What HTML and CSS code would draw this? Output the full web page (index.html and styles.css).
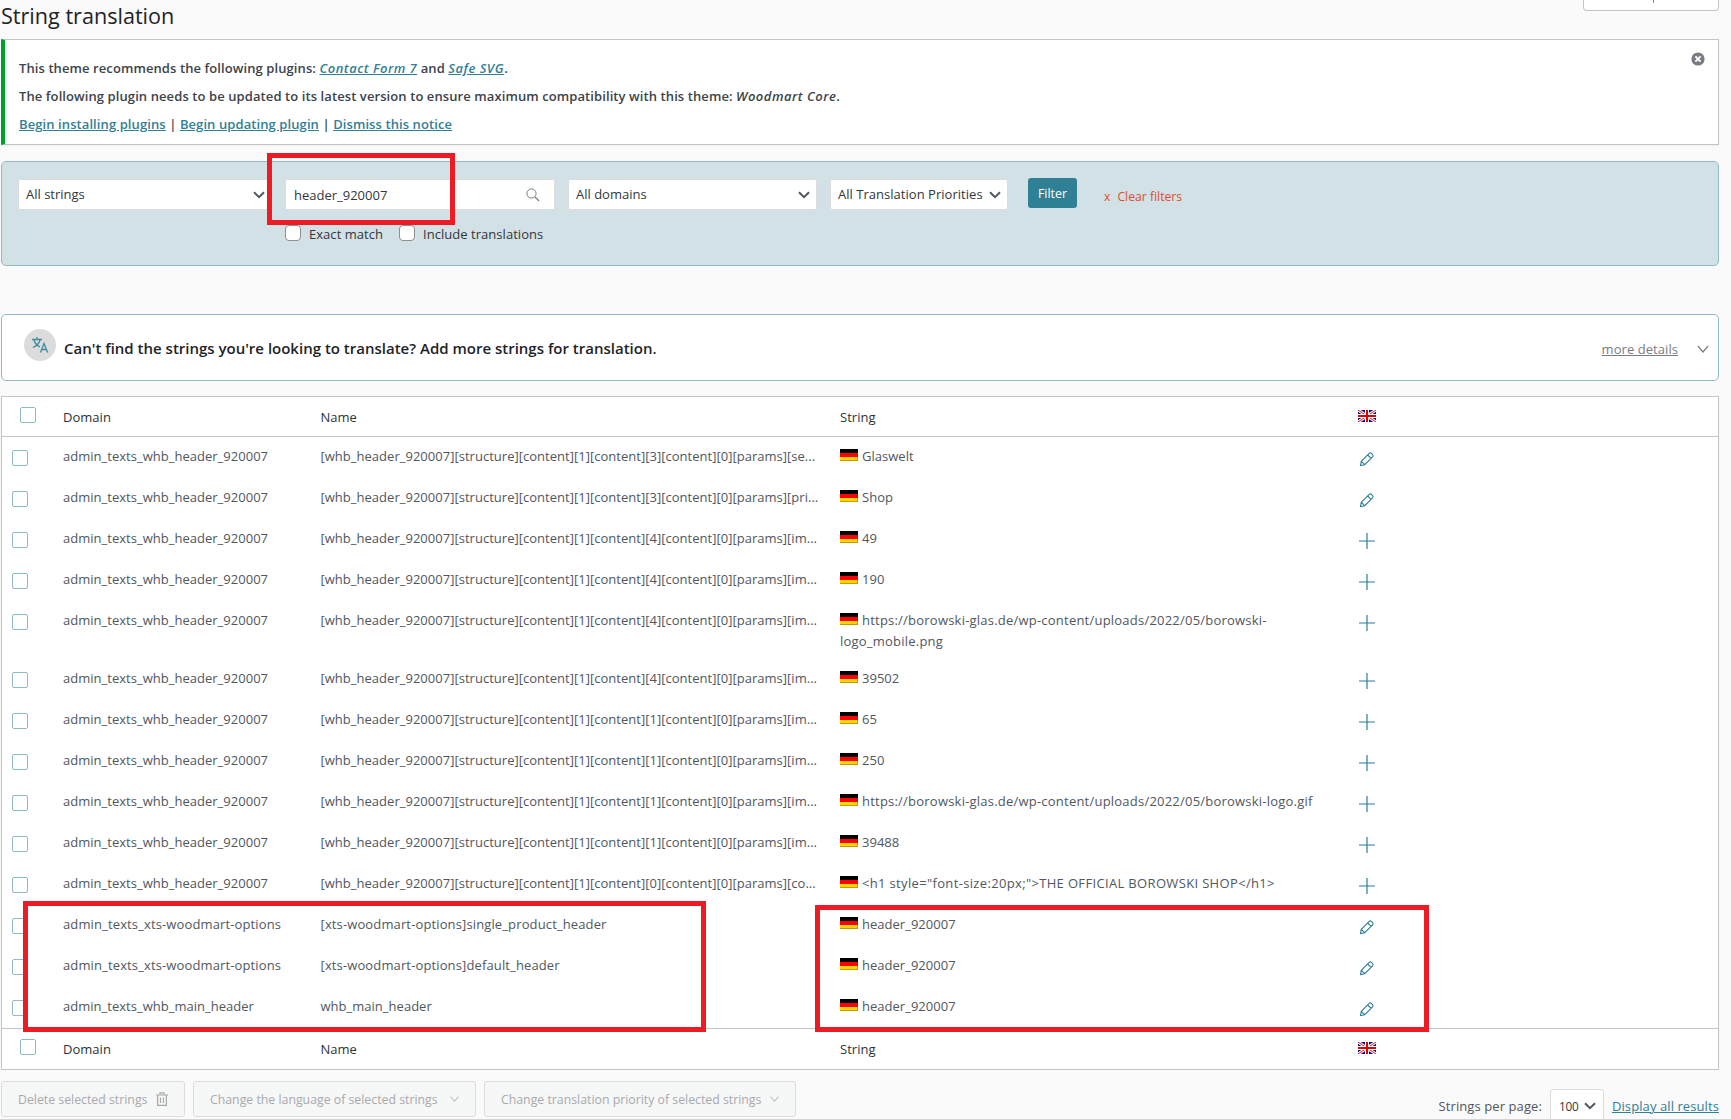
FILE: index.html
```html
<!DOCTYPE html>
<html lang="en">
<head>
  <meta charset="UTF-8" />
  <meta name="viewport" content="width=device-width, initial-scale=1.0"/>
  <title>String translation</title>
  <link rel="stylesheet" href="styles.css">
</head>
<body>
  <!-- shared icons -->
  <svg class="sprite" xmlns="http://www.w3.org/2000/svg">
    <symbol id="flag-de" viewBox="0 0 18 12">
      <rect width="18" height="4" fill="#000"/>
      <rect y="4" width="18" height="4" fill="#f00"/>
      <rect y="8" width="18" height="4" fill="#ffd500"/>
      <path d="M0 11.5h18M17.5 8v4" stroke="#c79a00" fill="none"/>
    </symbol>
    <symbol id="flag-gb" viewBox="0 0 18 12">
      <rect width="18" height="12" fill="#00107b"/>
      <path d="M0 0l18 12M18 0L0 12" stroke="#fff" stroke-width="3"/>
      <path d="M0 0l18 12M18 0L0 12" stroke="#e8112d" stroke-width="1"/>
      <path d="M9 0v12M0 6h18" stroke="#fff" stroke-width="4"/>
      <path d="M9 0v12M0 6h18" stroke="#e00000" stroke-width="2"/>
    </symbol>
    <symbol id="pencil" viewBox="0 0 16 16">
      <path d="M1.500 14.500l.8-4.200 7.900-7.900a1.500 1.500 0 0 1 2.100 0l1.300 1.300a1.500 1.500 0 0 1 0 2.100l-7.900 7.900zM2.300 10.300l3.400 3.400M8.700 4l3.400 3.400" fill="none" stroke="#2f7f95" stroke-width="1.100"/>
    </symbol>
    <symbol id="plus" viewBox="0 0 16 16">
      <path d="M8 0v16M0 8h16" stroke="#2f7f95" stroke-width="1.200" fill="none"/>
    </symbol>
    <symbol id="chevron" viewBox="0 0 12 8">
      <path d="M1 1.200l5 5 5-5" fill="none" stroke="currentColor" stroke-width="2"/>
    </symbol>
    <symbol id="chevron-thin" viewBox="0 0 12 8">
      <path d="M.8.8L6 7 11.200.8" fill="none" stroke="currentColor" stroke-width="1.300"/>
    </symbol>
  </svg>

  <div class="wrap">
    <header class="page-head">
      <h1>String translation</h1>
      <div class="screen-options"><span></span></div>
    </header>

    <div class="notice">
      <p>This theme recommends the following plugins: <a href="#"><em>Contact Form 7</em></a> and <a href="#"><em>Safe SVG</em></a>.</p>
      <p>The following plugin needs to be updated to its latest version to ensure maximum compatibility with this theme: <em>Woodmart Core</em>.</p>
      <p><a href="#">Begin installing plugins</a> | <a href="#">Begin updating plugin</a> | <a href="#">Dismiss this notice</a></p>
      <svg class="dismiss" viewBox="0 0 14 14"><circle cx="7" cy="7" r="6.600" fill="#787c82"/><path d="M4.400 4.400l5.200 5.200M9.600 4.400L4.400 9.600" stroke="#fff" stroke-width="2"/></svg>
    </div>

    <form class="filters">
      <div class="select select-strings">All strings <svg class="arrow"><use href="#chevron"/></svg></div>
      <div class="search">
        <div class="search-field">
          <span class="search-text">header_920007</span>
          <svg class="search-icon" viewBox="0 0 14 14"><circle cx="5.500" cy="5.500" r="4.600" fill="none" stroke="#787c82"/><path d="M9 9l4 4" stroke="#787c82" stroke-width="1.200"/></svg>
        </div>
        <div class="search-options">
          <label><input type="checkbox"><span>Exact match</span></label>
          <label><input type="checkbox"><span>Include translations</span></label>
        </div>
      </div>
      <div class="select select-domains">All domains <svg class="arrow"><use href="#chevron"/></svg></div>
      <div class="select select-priority">All Translation Priorities <svg class="arrow"><use href="#chevron"/></svg></div>
      <button type="button" class="btn-filter">Filter</button>
      <a class="clear" href="#"><span>x</span><span>Clear filters</span></a>
      <div class="mark mark-search"></div>
    </form>

    <section class="more-strings">
      <span class="translate-icon">
        <svg viewBox="0 0 18 18" fill="none" stroke="#3d8ba0" stroke-width="1.300"><path d="M1 3.500h10M6 1v2.500M3 4c.8 3 3.200 5.600 6 7M9 4c-.8 3-3.500 6-7 7.500M9.500 16.500L13 7.500l3.700 9M10.800 13.500h4.600"/></svg>
      </span>
      <h2>Can't find the strings you're looking to translate? Add more strings for translation.</h2>
      <a href="#">more details</a>
      <svg class="arrow"><use href="#chevron-thin"/></svg>
    </section>

    <div class="table">
      <div class="row head">
        <input type="checkbox"><span>Domain</span><span>Name</span><span>String</span><svg class="flag"><use href="#flag-gb"/></svg>
      </div>
      <div class="row">
        <input type="checkbox"><span>admin_texts_whb_header_920007</span><span>[whb_header_920007][structure][content][1][content][3][content][0][params][se...</span>
        <span><svg class="flag"><use href="#flag-de"/></svg>Glaswelt</span><svg class="action"><use href="#pencil"/></svg>
      </div>
      <div class="row">
        <input type="checkbox"><span>admin_texts_whb_header_920007</span><span>[whb_header_920007][structure][content][1][content][3][content][0][params][pri...</span>
        <span><svg class="flag"><use href="#flag-de"/></svg>Shop</span><svg class="action"><use href="#pencil"/></svg>
      </div>
      <div class="row">
        <input type="checkbox"><span>admin_texts_whb_header_920007</span><span>[whb_header_920007][structure][content][1][content][4][content][0][params][im...</span>
        <span><svg class="flag"><use href="#flag-de"/></svg>49</span><svg class="action"><use href="#plus"/></svg>
      </div>
      <div class="row">
        <input type="checkbox"><span>admin_texts_whb_header_920007</span><span>[whb_header_920007][structure][content][1][content][4][content][0][params][im...</span>
        <span><svg class="flag"><use href="#flag-de"/></svg>190</span><svg class="action"><use href="#plus"/></svg>
      </div>
      <div class="row">
        <input type="checkbox"><span>admin_texts_whb_header_920007</span><span>[whb_header_920007][structure][content][1][content][4][content][0][params][im...</span>
        <span class="url"><svg class="flag"><use href="#flag-de"/></svg>https://borowski-glas.de/wp-content/uploads/2022/05/borowski-<br>logo_mobile.png</span><svg class="action"><use href="#plus"/></svg>
      </div>
      <div class="row">
        <input type="checkbox"><span>admin_texts_whb_header_920007</span><span>[whb_header_920007][structure][content][1][content][4][content][0][params][im...</span>
        <span><svg class="flag"><use href="#flag-de"/></svg>39502</span><svg class="action"><use href="#plus"/></svg>
      </div>
      <div class="row">
        <input type="checkbox"><span>admin_texts_whb_header_920007</span><span>[whb_header_920007][structure][content][1][content][1][content][0][params][im...</span>
        <span><svg class="flag"><use href="#flag-de"/></svg>65</span><svg class="action"><use href="#plus"/></svg>
      </div>
      <div class="row">
        <input type="checkbox"><span>admin_texts_whb_header_920007</span><span>[whb_header_920007][structure][content][1][content][1][content][0][params][im...</span>
        <span><svg class="flag"><use href="#flag-de"/></svg>250</span><svg class="action"><use href="#plus"/></svg>
      </div>
      <div class="row">
        <input type="checkbox"><span>admin_texts_whb_header_920007</span><span>[whb_header_920007][structure][content][1][content][1][content][0][params][im...</span>
        <span class="url"><svg class="flag"><use href="#flag-de"/></svg>https://borowski-glas.de/wp-content/uploads/2022/05/borowski-logo.gif</span><svg class="action"><use href="#plus"/></svg>
      </div>
      <div class="row">
        <input type="checkbox"><span>admin_texts_whb_header_920007</span><span>[whb_header_920007][structure][content][1][content][1][content][0][params][im...</span>
        <span><svg class="flag"><use href="#flag-de"/></svg>39488</span><svg class="action"><use href="#plus"/></svg>
      </div>
      <div class="row">
        <input type="checkbox"><span>admin_texts_whb_header_920007</span><span>[whb_header_920007][structure][content][1][content][0][content][0][params][co...</span>
        <span class="markup"><svg class="flag"><use href="#flag-de"/></svg>&lt;h1 style="font-size:20px;"&gt;THE OFFICIAL BOROWSKI SHOP&lt;/h1&gt;</span><svg class="action"><use href="#plus"/></svg>
      </div>
      <div class="row">
        <input type="checkbox"><span class="option">admin_texts_xts-woodmart-options</span><span class="option">[xts-woodmart-options]single_product_header</span>
        <span><svg class="flag"><use href="#flag-de"/></svg>header_920007</span><svg class="action"><use href="#pencil"/></svg>
      </div>
      <div class="row">
        <input type="checkbox"><span class="option">admin_texts_xts-woodmart-options</span><span class="option">[xts-woodmart-options]default_header</span>
        <span><svg class="flag"><use href="#flag-de"/></svg>header_920007</span><svg class="action"><use href="#pencil"/></svg>
      </div>
      <div class="row">
        <input type="checkbox"><span>admin_texts_whb_main_header</span><span>whb_main_header</span>
        <span><svg class="flag"><use href="#flag-de"/></svg>header_920007</span><svg class="action"><use href="#pencil"/></svg>
      </div>
      <div class="row foot">
        <input type="checkbox"><span>Domain</span><span>Name</span><span>String</span><svg class="flag"><use href="#flag-gb"/></svg>
      </div>
      <div class="mark mark-names"></div>
      <div class="mark mark-strings"></div>
    </div>

    <footer class="actions">
      <button type="button" class="btn-delete" disabled>Delete selected strings
        <svg class="trash" viewBox="0 0 12 14" fill="none" stroke="currentColor" stroke-width="1.200"><path d="M0 3h12M4 3V.8h4V3M1.600 3v10.400h8.800V3M4.500 5.500v5.500M7.500 5.500v5.500"/></svg>
      </button>
      <button type="button" class="btn-language" disabled>Change the language of selected strings <svg class="small-arrow"><use href="#chevron-thin"/></svg></button>
      <button type="button" class="btn-priority" disabled>Change translation priority of selected strings <svg class="small-arrow"><use href="#chevron-thin"/></svg></button>
      <div class="paging">
        <span>Strings per page:</span>
        <div class="select select-page">100 <svg class="arrow"><use href="#chevron"/></svg></div>
        <a href="#">Display all results</a>
      </div>
    </footer>
  </div>
</body>
</html>
```
FILE: styles.css
```css
:root {
  --teal: #2f7f95;
  --teal-border: #8fbac6;
  --line: #c3c4c7;
  --mark: #ed1c24;
}

* {
  margin: 0;
  padding: 0;
  box-sizing: border-box;
}

body {
  font-family: "Open Sans", "Noto Sans", sans-serif;
  font-size: 13px;
  line-height: 21px;
  color: #50575e;
  background: #fafafa;
  height: 1119px;
  overflow: hidden;
}

a {
  color: var(--teal);
}

.sprite {
  display: none;
}

.wrap {
  width: 1719px;
  padding-left: 1px;
}

.page-head {
  display: flex;
  justify-content: space-between;
  height: 39px;
}

.page-head h1 {
  font-size: 21.6px;
  font-weight: 400;
  line-height: 32px;
  color: #1d2327;
}

.screen-options {
  width: 136px;
  height: 11px;
  padding-left: 69px;
  border: 1px solid var(--line);
  border-top: none;
  border-radius: 0 0 4px 4px;
  background: #fff;
}

.screen-options span {
  display: block;
  width: 1px;
  height: 3px;
  background: #8c8f94;
}

.notice {
  position: relative;
  height: 106px;
  padding: 14px 14px 0;
  border: 1px solid var(--line);
  border-left: 4px solid #00a32a;
  background: #fff;
  box-shadow: 0 1px 1px rgba(0, 0, 0, 0.04);
  font-weight: 600;
  letter-spacing: 0.09px;
  color: #3c434a;
}

.notice p {
  height: 28px;
  line-height: 28px;
  white-space: nowrap;
}

.notice em {
  letter-spacing: 0.48px;
}

.dismiss {
  position: absolute;
  top: 12px;
  right: 13px;
  width: 14px;
  height: 14px;
}

.filters {
  position: relative;
  display: flex;
  height: 105px;
  margin-top: 16px;
  padding: 17px 17px 0;
  border: 1px solid var(--teal-border);
  border-radius: 5px;
  background: #d2e1e5;
  color: #32373c;
}

.select {
  display: flex;
  align-items: center;
  justify-content: space-between;
  height: 31px;
  padding: 0 3px 0 7px;
  border: 1px solid #dcdcde;
  border-radius: 2px;
  background: #fff;
  color: #32373c;
  white-space: nowrap;
}

.arrow {
  width: 12px;
  height: 8px;
  color: #50575e;
}

.select-strings {
  width: 250px;
  margin-left: -1px;
  padding-right: 2px;
}

.search {
  width: 270px;
  margin: 0 13px 0 17px;
}

.search-field {
  display: flex;
  align-items: center;
  justify-content: space-between;
  height: 31px;
  padding: 0 14px 0 8px;
  border: 1px solid #dcdcde;
  background: #fff;
}

.search-text {
  padding-top: 2px;
}

.search-icon {
  width: 14px;
  height: 14px;
}

.search-options {
  display: flex;
  gap: 16px;
  margin-top: 14px;
}

.search-options label {
  display: flex;
  gap: 8px;
  white-space: nowrap;
}

.search-options label span {
  letter-spacing: 0.04px;
}

input[type="checkbox"] {
  appearance: none;
  flex: none;
  width: 16px;
  height: 16px;
  border: 1px solid var(--teal-border);
  border-radius: 2px;
  background: #fff;
}

.search-options input[type="checkbox"] {
  margin-top: 1px;
  border-color: #8c8f94;
  border-radius: 4px;
}

.select-domains {
  width: 249px;
  padding-right: 6px;
}

.select-priority {
  width: 178px;
  margin-left: 13px;
  padding-right: 6px;
  letter-spacing: 0.03px;
}

.btn-filter {
  width: 49px;
  height: 30px;
  margin: -1px 0 0 20px;
  border: none;
  border-radius: 3px;
  background: var(--teal);
  font: inherit;
  font-size: 12.4px;
  color: #fff;
}

.clear {
  display: flex;
  gap: 7px;
  margin: 7px 0 0 27px;
  font-size: 12.2px;
  color: #dd4f2b;
  text-decoration: none;
}

/* red highlight boxes */
.mark {
  position: absolute;
  border: 5px solid var(--mark);
}

.mark-search {
  top: -9px;
  left: 265px;
  width: 188px;
  height: 72px;
}

.more-strings {
  display: flex;
  align-items: center;
  height: 67px;
  margin-top: 48px;
  padding: 0 9px 0 22px;
  border: 1px solid var(--teal-border);
  border-radius: 5px;
  background: #fff;
}

.translate-icon {
  display: flex;
  align-items: center;
  justify-content: center;
  width: 32px;
  height: 32px;
  margin: -5px 8px 0 0;
  border-radius: 50%;
  background: #dcdcdc;
}

.translate-icon svg {
  width: 18px;
  height: 18px;
}

.more-strings h2 {
  margin: 2px auto 0 0;
  font-size: 15px;
  font-weight: 600;
  color: #1d2327;
}

.more-strings a {
  margin: 4px 19px 0 0;
  letter-spacing: 0.06px;
  color: #787c82;
}

.more-strings .arrow {
  margin-top: 3px;
  color: #787c82;
}

.table {
  position: relative;
  margin-top: 15px;
  border: 1px solid var(--line);
  background: #fff;
}

.row {
  display: grid;
  grid-template-columns: 61px 257.5px 519.5px 518px 18px;
  align-items: start;
  min-height: 41px;
  padding: 9px 0 7px;
  letter-spacing: 0.02px;
  white-space: nowrap;
}

.row .url {
  letter-spacing: 0.22px;
}

.row .markup {
  letter-spacing: 0.34px;
}

.row .option {
  letter-spacing: 0.13px;
}

.row input[type="checkbox"] {
  margin: 4px 0 0 10px;
}

.flag {
  width: 18px;
  height: 12px;
}

.row span .flag {
  margin-right: 4px;
}

.action {
  width: 16px;
  height: 16px;
  margin: 5px 0 0 1px;
}

.head,
.foot {
  min-height: 39px;
  height: 40px;
  padding-top: 10px;
  color: #2c3338;
}

.head {
  border-bottom: 1px solid var(--line);
}

.foot {
  height: 41px;
  border-top: 1px solid var(--line);
}

.head input[type="checkbox"],
.foot input[type="checkbox"] {
  margin: 0 0 0 18px;
}

.head .flag,
.foot .flag {
  margin-top: 3px;
}

.mark-names {
  top: 504px;
  left: 21px;
  width: 683px;
  height: 131px;
}

.mark-strings {
  top: 508px;
  left: 813px;
  width: 614px;
  height: 127px;
}

.actions {
  display: flex;
  gap: 8px;
  margin-top: 11px;
}

.actions button {
  display: flex;
  align-items: center;
  justify-content: space-between;
  height: 36px;
  padding: 0 16px;
  border: 1px solid #dcdcde;
  border-radius: 3px;
  background: #f6f7f7;
  font: inherit;
  font-size: 12.3px;
  color: #a7aaad;
  white-space: nowrap;
}

.trash {
  width: 12px;
  height: 14px;
}

.small-arrow {
  width: 9px;
  height: 6px;
}

.actions .btn-delete {
  width: 184px;
}

.actions .btn-language {
  width: 283px;
}

.actions .btn-priority {
  width: 312px;
}

.paging {
  display: flex;
  margin-left: auto;
  padding-top: 8px;
  line-height: 34px;
  letter-spacing: 0.09px;
  white-space: nowrap;
}

.select-page {
  width: 54px;
  height: 34px;
  margin: 0 8px;
  padding: 0 7px 0 8px;
  border-radius: 3px;
  font-size: 11.8px;
  letter-spacing: -0.2px;
}
```
